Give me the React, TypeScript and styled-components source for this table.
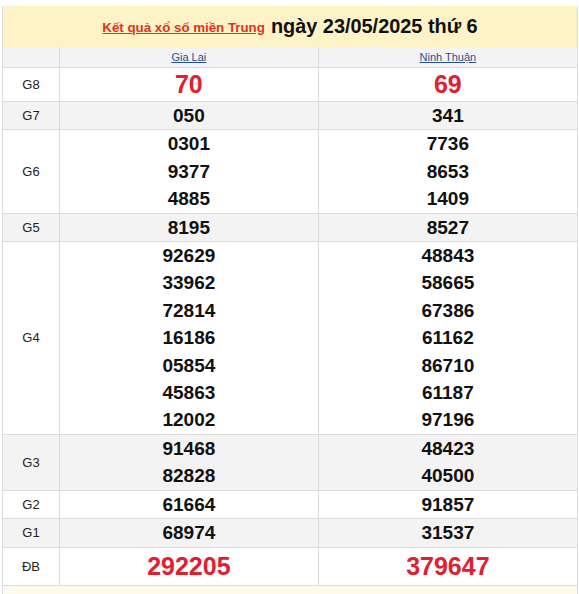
import React from "react";
import styled, { createGlobalStyle } from "styled-components";

interface PrizeRow {
  label: string;
  gialai: string[];
  ninhthuan: string[];
  big?: boolean;
  tall?: boolean;
}

const rows: PrizeRow[] = [
  { label: "G8", gialai: ["70"], ninhthuan: ["69"], big: true },
  { label: "G7", gialai: ["050"], ninhthuan: ["341"] },
  { label: "G6", gialai: ["0301", "9377", "4885"], ninhthuan: ["7736", "8653", "1409"] },
  { label: "G5", gialai: ["8195"], ninhthuan: ["8527"] },
  {
    label: "G4",
    gialai: ["92629", "33962", "72814", "16186", "05854", "45863", "12002"],
    ninhthuan: ["48843", "58665", "67386", "61162", "86710", "61187", "97196"],
  },
  { label: "G3", gialai: ["91468", "82828"], ninhthuan: ["48423", "40500"] },
  { label: "G2", gialai: ["61664"], ninhthuan: ["91857"] },
  { label: "G1", gialai: ["68974"], ninhthuan: ["31537"] },
  { label: "ĐB", gialai: ["292205"], ninhthuan: ["379647"], big: true, tall: true },
];

const GlobalStyle = createGlobalStyle`
  body {
    margin: 0;
    background: #ffffff;
    font-family: Arial, "Liberation Sans", sans-serif;
  }
`;

const Box = styled.div`
  width: 574px;
  margin: 6px 0 0 2px;
  border-left: 1px solid #dcdcdc;
  border-right: 1px solid #dcdcdc;
  background: #fff;
`;

const Title = styled.div`
  background: #fdf3c6;
  height: 41px;
  display: flex;
  align-items: center;
  justify-content: center;
  gap: 6px;
  border-top-right-radius: 4px;
`;

const TitleLink = styled.a`
  color: #e0321e;
  font-size: 13.3px;
  font-weight: bold;
  text-decoration: underline;
  margin-top: 2px;
`;

const TitleDate = styled.span`
  color: #111;
  font-size: 19.9px;
  font-weight: bold;
`;

const Table = styled.table`
  width: 100%;
  border-collapse: collapse;
  table-layout: fixed;
`;

const Row = styled.tr<{ $stripe: boolean }>`
  background: ${(p) => (p.$stripe ? "#f3f3f3" : "#ffffff")};
`;

const LabelCell = styled.td`
  width: 56px;
  text-align: center;
  font-size: 13px;
  color: #222;
  border-bottom: 1px solid #dcdcdc;
  border-right: 1px solid #dcdcdc;
  padding: 0;
`;

const HeadCell = styled.th<{ $narrow?: boolean }>`
  width: ${(p) => (p.$narrow ? "56px" : "auto")};
  height: 20px;
  font-weight: normal;
  font-size: 11px;
  border-bottom: 1px solid #dcdcdc;
  border-right: 1px solid #dcdcdc;
  padding: 0;

  &:last-child {
    border-right: 0;
  }
`;

const ProvinceLink = styled.a`
  color: #1f4f9e;
  text-decoration: underline;
`;

const NumCell = styled.td`
  text-align: center;
  border-bottom: 1px solid #dcdcdc;
  border-right: 1px solid #dcdcdc;
  padding: 0;

  &:last-child {
    border-right: 0;
  }
`;

const Num = styled.div<{ $big?: boolean; $tall?: boolean }>`
  font-weight: bold;
  font-size: ${(p) => (p.$big ? "25px" : "19px")};
  line-height: ${(p) => (p.$tall ? "37px" : p.$big ? "33px" : "27.4px")};
  color: ${(p) => (p.$big ? "#e0202e" : "#111")};
`;

const Footer = styled.div`
  height: 9px;
  background: #fffbec;
`;

export default function App() {
  return (
    <>
      <GlobalStyle />
      <Box>
        <Title>
          <TitleLink href="#">Kết quả xổ số miền Trung</TitleLink>
          <TitleDate>ngày 23/05/2025 thứ 6</TitleDate>
        </Title>
        <Table>
          <thead>
            <Row $stripe>
              <HeadCell $narrow></HeadCell>
              <HeadCell>
                <ProvinceLink href="#">Gia Lai</ProvinceLink>
              </HeadCell>
              <HeadCell>
                <ProvinceLink href="#">Ninh Thuận</ProvinceLink>
              </HeadCell>
            </Row>
          </thead>
          <tbody>
            {rows.map((r, i) => (
              <Row key={r.label} $stripe={i % 2 === 1}>
                <LabelCell>{r.label}</LabelCell>
                <NumCell>
                  {r.gialai.map((n, k) => (
                    <Num key={k} $big={r.big} $tall={r.tall}>
                      {n}
                    </Num>
                  ))}
                </NumCell>
                <NumCell>
                  {r.ninhthuan.map((n, k) => (
                    <Num key={k} $big={r.big} $tall={r.tall}>
                      {n}
                    </Num>
                  ))}
                </NumCell>
              </Row>
            ))}
          </tbody>
        </Table>
        <Footer />
      </Box>
    </>
  );
}
